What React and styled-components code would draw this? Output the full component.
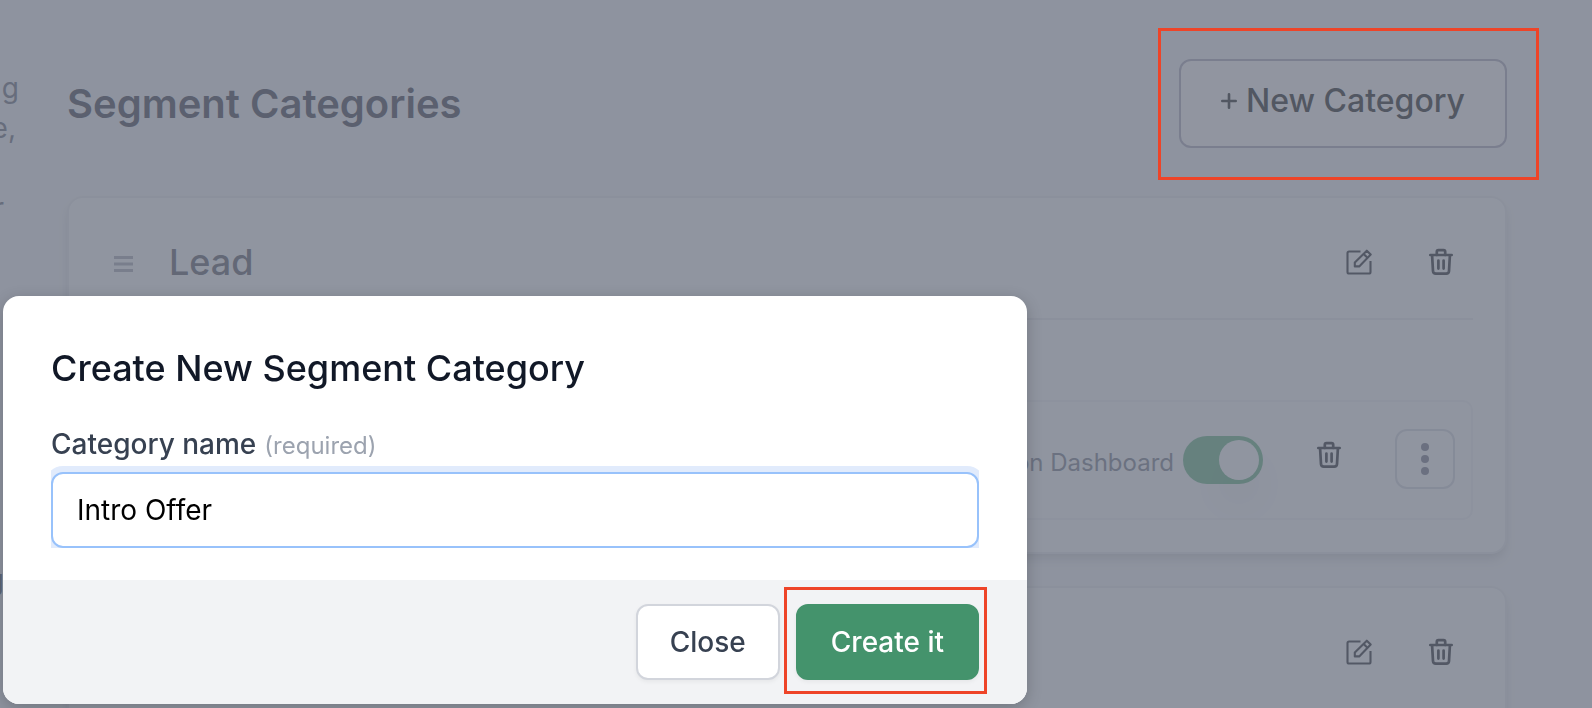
import React, { useState } from "react";
import styled, { createGlobalStyle } from "styled-components";

const GlobalStyle = createGlobalStyle`
  *, *::before, *::after { box-sizing: border-box; }
  body {
    margin: 0;
    overflow: hidden;
    background: #f7f7f9;
    font-family: Inter, "Liberation Sans", sans-serif;
    font-optical-sizing: none;
  }
  button, input { font: inherit; }
  h1, h2, p { margin: 0; }
`;

const Page = styled.div`
  display: flex;
  min-height: 100vh;
`;

const Aside = styled.aside`
  flex: none;
  width: 20px;
  padding-top: 68px;
  overflow: hidden;
  color: #5b6070;
  font-size: 28px;
  line-height: 40px;
`;

const AsideLine = styled.p`
  display: flex;
  justify-content: flex-end;
  height: 40px;
  margin-top: ${(p) => p.$before || 0}px;
  padding-right: ${(p) => p.$end}px;
  color: ${(p) => (p.$strong ? "#374151" : "inherit")};
`;

const Main = styled.main`
  flex: 1;
  min-width: 0;
  padding: 59px 85px 0 47px;
`;

const Header = styled.header`
  display: flex;
  align-items: center;
  justify-content: space-between;
  margin-bottom: 48px;
`;

const PageTitle = styled.h1`
  color: #2d2d3c;
  font-size: 40px;
  font-weight: 600;
  line-height: 48px;
`;

const Callout = styled.div`
  position: relative;
  display: flex;
  z-index: 2;

  &::after {
    content: "";
    position: absolute;
    inset: ${(p) => p.$inset};
    border: 3px solid #ee4428;
    pointer-events: none;
  }
`;

const NewButton = styled.button`
  display: flex;
  align-items: center;
  gap: 9px;
  padding: 20px 40px 25px;
  border: 2px solid #7a7e8e;
  border-radius: 12px;
  background: #9195a0;
  color: #525762;
  font-size: 32px;
  font-weight: 500;
  line-height: 40px;
  white-space: nowrap;
`;

const Backdrop = styled.div`
  position: fixed;
  inset: 0;
  z-index: 1;
  background: rgba(107, 114, 128, 0.75);
`;

const Cards = styled.div`
  display: flex;
  flex-direction: column;
  gap: 32px;
`;

const Card = styled.section`
  padding: 0 32px 32px;
  border: 2px solid #ececee;
  border-radius: 16px;
  background: #fff;
  box-shadow: 0 8px 12px -2px rgba(0, 0, 0, 0.12), 0 4px 8px -2px rgba(0, 0, 0, 0.08);
`;

const CardHead = styled.div`
  display: flex;
  align-items: center;
  min-height: 122px;
  padding: 8px 18px 0 13px;
  border-bottom: 2px solid ${(p) => (p.$divided ? "#ebecee" : "transparent")};
`;

const CardTitle = styled.h2`
  flex: 1;
  padding-left: 35px;
  color: #4b4b5a;
  font-size: 36px;
  font-weight: 500;
  line-height: 48px;
`;

const Actions = styled.div`
  display: flex;
  gap: 54px;
  margin-left: auto;
`;

const IconButton = styled.button`
  display: flex;
  padding: 0;
  border: 0;
  background: none;
  color: #0c0f16;
`;

const SegmentRow = styled.div`
  display: flex;
  align-items: center;
  justify-content: flex-end;
  gap: 52px;
  height: 120px;
  margin-top: 80px;
  padding-right: 16px;
  border: 2px solid #f3f3f5;
  border-radius: 10px;
  background: #fdfdfe;
`;

const SwitchLabel = styled.label`
  display: flex;
  align-items: center;
  gap: 9px;
  color: #6b7280;
  font-size: 24px;
  line-height: 32px;
`;

const LabelText = styled.span`
  padding-top: 6px;
`;

const Switch = styled.input`
  appearance: none;
  width: 80px;
  height: 48px;
  margin: 0;
  padding: 4px;
  border-radius: 24px;
  background: #59b07a;

  &::before {
    content: "";
    display: block;
    width: 40px;
    height: 40px;
    border-radius: 50%;
    background: #fff;
    box-shadow: 0 24px 32px rgba(0, 0, 0, 0.06);
  }

  &:checked::before { margin-left: 32px; }
`;

const RowDelete = styled(IconButton)`
  padding-bottom: 10px;
`;

const MoreButton = styled.button`
  display: flex;
  flex-direction: column;
  align-items: center;
  justify-content: center;
  gap: 4px;
  width: 60px;
  height: 60px;
  margin-bottom: 2px;
  padding: 0;
  border: 2px solid #d4d5dd;
  border-radius: 12px;
  background: #fff;
`;

const Dot = styled.span`
  width: 8px;
  height: 8px;
  border-radius: 50%;
  background: #6b6c80;
`;

const Dialog = styled.form`
  position: fixed;
  top: 296px;
  left: 3px;
  z-index: 3;
  width: 1024px;
  max-width: calc(100vw - 6px);
  border-radius: 16px;
  background: #fff;
  box-shadow: 0 4px 16px rgba(0, 0, 0, 0.2);
`;

const DialogBody = styled.div`
  padding: 48px 48px 32px;
`;

const DialogTitle = styled.h2`
  margin-bottom: 32px;
  color: #111827;
  font-size: 36px;
  font-weight: 500;
  line-height: 48px;
`;

const FieldLabel = styled.label`
  display: flex;
  align-items: baseline;
  gap: 8px;
  margin-bottom: 8px;
  color: #374151;
  font-size: 28px;
  font-weight: 500;
  line-height: 40px;
`;

const Hint = styled.span`
  color: #9ca3af;
  font-size: 24px;
  font-weight: 400;
  line-height: 32px;
`;

const TextInput = styled.input`
  display: block;
  width: 100%;
  height: 76px;
  padding: 0 24px;
  border: 2px solid #98c2fb;
  border-radius: 12px;
  outline: none;
  background: #fff;
  box-shadow: 0 0 0 6px #e1ebfc;
  clip-path: inset(-6px 0 0 0);
  color: #000;
  font-size: 28px;
`;

const DialogFooter = styled.footer`
  display: flex;
  justify-content: flex-end;
  gap: 16px;
  padding: 24px 48px;
  border-radius: 0 0 16px 16px;
  background: #f2f3f5;
`;

const Button = styled.button`
  height: 76px;
  padding: 0 ${(p) => (p.$primary ? 33 : 32)}px;
  border: 2px solid ${(p) => (p.$primary ? "#44936c" : "#d2d5dc")};
  border-radius: 12px;
  background: ${(p) => (p.$primary ? "#44936c" : "#fff")};
  box-shadow: 0 2px 4px rgba(0, 0, 0, 0.05);
  color: ${(p) => (p.$primary ? "#fff" : "#374151")};
  font-size: 28px;
  font-weight: 500;
  white-space: nowrap;
`;

const PlusIcon = () => (
  <svg width="16" height="16" viewBox="0 0 16 16" fill="none" stroke="currentColor" strokeWidth="2.6" strokeLinecap="round" aria-hidden="true">
    <path d="M8 1.3v13.4M1.3 8h13.4" />
  </svg>
);

const GripIcon = () => (
  <svg width="20" height="20" viewBox="0 0 20 20" stroke="#a2a4b0" strokeWidth="2.8" aria-hidden="true">
    <path d="M0 5.500h19M0 12h19M0 18.500h19" />
  </svg>
);

const EditIcon = () => (
  <svg width="28" height="28" viewBox="0 0 28 28" fill="none" stroke="currentColor" strokeWidth="2.1" strokeLinejoin="round" aria-hidden="true">
    <path d="M15.500 3.500H4.100Q2.500 3.500 2.500 5.100V23.900Q2.500 25.500 4.100 25.500H23.900Q25.500 25.500 25.500 23.900V13" />
    <path d="M21.800 2.700 25.700 6.600 14.200 18.400H9.800V14.600Z" />
    <path d="M18.600 5.900 22.500 9.800" />
  </svg>
);

const TrashIcon = () => (
  <svg width="28" height="28" viewBox="0 0 28 28" fill="none" stroke="currentColor" strokeWidth="2.7" strokeLinecap="round" strokeLinejoin="round" aria-hidden="true">
    <path d="M3.300 7H24.700" />
    <path d="M9.800 7V3.800Q9.800 2.200 11.400 2.200H16.600Q18.200 2.200 18.200 3.800V7" />
    <path d="M5.100 7.400 6 23.200Q6.200 25.600 8.700 25.600H19.300Q21.800 25.600 22 23.200L22.900 7.400" />
    <path d="M11.400 12.600V20.600M16.600 12.600V20.600" />
  </svg>
);

const HeadActions = () => (
  <Actions>
    <IconButton type="button" aria-label="Edit category"><EditIcon /></IconButton>
    <IconButton type="button" aria-label="Delete category"><TrashIcon /></IconButton>
  </Actions>
);

export default function App() {
  const [name, setName] = useState("Intro Offer");
  const [shown, setShown] = useState(true);

  return (
    <>
      <GlobalStyle />
      <Page>
        <Aside>
          <AsideLine $end={1}>g</AsideLine>
          <AsideLine $end={4}>e,</AsideLine>
          <AsideLine $before={40} $end={16}>r</AsideLine>
          <AsideLine $before={332} $end={16} $strong>g</AsideLine>
        </Aside>
        <Main>
          <Header>
            <PageTitle>Segment Categories</PageTitle>
            <Callout $inset="-31px -32px -32px -21px">
              <NewButton type="button"><PlusIcon />New Category</NewButton>
            </Callout>
          </Header>
          <Cards>
            <Card>
              <CardHead $divided>
                <GripIcon />
                <CardTitle>Lead</CardTitle>
                <HeadActions />
              </CardHead>
              <SegmentRow>
                <SwitchLabel>
                  <LabelText>on Dashboard</LabelText>
                  <Switch type="checkbox" role="switch" checked={shown} onChange={(e) => setShown(e.target.checked)} />
                </SwitchLabel>
                <RowDelete type="button" aria-label="Delete segment"><TrashIcon /></RowDelete>
                <MoreButton type="button" aria-label="More"><Dot /><Dot /><Dot /></MoreButton>
              </SegmentRow>
            </Card>
            <Card>
              <CardHead>
                <HeadActions />
              </CardHead>
            </Card>
          </Cards>
        </Main>
      </Page>
      <Backdrop />
      <Dialog role="dialog" aria-labelledby="dialog-title" onSubmit={(e) => e.preventDefault()}>
        <DialogBody>
          <DialogTitle id="dialog-title">Create New Segment Category</DialogTitle>
          <FieldLabel htmlFor="category-name">
            Category name <Hint>(required)</Hint>
          </FieldLabel>
          <TextInput id="category-name" type="text" value={name} onChange={(e) => setName(e.target.value)} />
        </DialogBody>
        <DialogFooter>
          <Button type="button">Close</Button>
          <Callout $inset="-17px -8px -14px -12px">
            <Button type="submit" $primary>Create it</Button>
          </Callout>
        </DialogFooter>
      </Dialog>
    </>
  );
}
